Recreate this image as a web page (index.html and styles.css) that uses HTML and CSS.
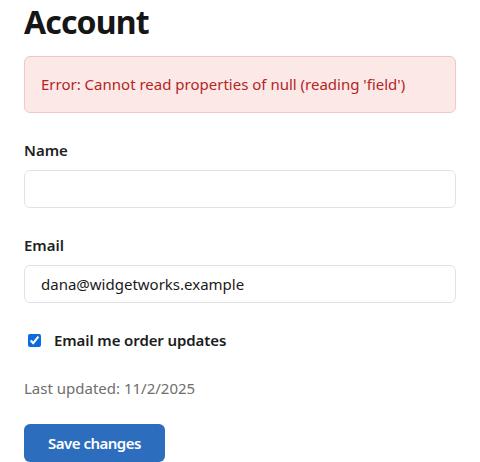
FILE: index.html
```html
<!DOCTYPE html>
<html lang="en">
<head>
<meta charset="utf-8">
<title>Account</title>
<link rel="stylesheet" href="styles.css">
</head>
<body>
<main class="page">
  <h1 class="title">Account</h1>
  <div class="alert" role="alert">Error: Cannot read properties of null (reading 'field')</div>
  <form class="form">
    <div class="field">
      <label class="label" for="name">Name</label>
      <input class="input" id="name" type="text">
    </div>
    <div class="field">
      <label class="label" for="email">Email</label>
      <input class="input" id="email" type="email" value="dana@widgetworks.example">
    </div>
    <label class="check">
      <input class="check-box" type="checkbox" checked>
      <span class="check-text">Email me order updates</span>
    </label>
    <p class="meta">Last updated: 11/2/2025</p>
    <button class="btn" type="button">Save changes</button>
  </form>
</main>
</body>
</html>
```
FILE: styles.css
```css
* { box-sizing: border-box; }
html, body { margin: 0; padding: 0; background: #ffffff; }
body {
  font-family: "Noto Sans", "Open Sans", sans-serif;
  color: #1f1f1f;
}
.page { padding: 0 24px; }
.title {
  margin: 2px 0 14px;
  font-size: 32px;
  line-height: 40px;
  font-weight: 700;
  letter-spacing: -0.85px;
  color: #161616;
}
.alert {
  margin: 0 0 27px;
  padding: 16px;
  line-height: 23px;
  font-size: 15px;
  color: #b3261e;
  background: #fde8e8;
  border: 1px solid #f5c5c5;
  border-radius: 6px;
}
.form { display: flex; flex-direction: column; align-items: flex-start; }
.field { width: 100%; margin-bottom: 27px; }
.field + .field { margin-bottom: 26px; }
.label {
  display: block;
  margin-bottom: 10px;
  font-size: 15px;
  line-height: 20px;
  font-weight: 600;
  color: #1f1f1f;
}
.input {
  display: block;
  width: 100%;
  height: 38px;
  margin: 0;
  padding: 0 16px;
  font-family: inherit;
  font-size: 15px;
  color: #1a1a1a;
  background: #ffffff;
  border: 1px solid #e2e2e2;
  border-radius: 6px;
}
.check {
  display: flex;
  align-items: center;
  height: 22px;
  margin-bottom: 26px;
}
.check-box {
  width: 13px;
  height: 13px;
  margin: 0 13px 0 4px;
  accent-color: #0b6bde;
}
.check-text {
  font-size: 15px;
  font-weight: 600;
  letter-spacing: -0.1px;
  color: #1c1c1c;
}
.meta {
  margin: 0 0 25px;
  font-size: 15px;
  line-height: 22px;
  color: #6e6e6e;
}
.btn {
  height: 38px;
  padding: 0 24px;
  font-family: inherit;
  font-size: 15px;
  font-weight: 600;
  letter-spacing: -0.5px;
  color: #ffffff;
  background: #2c6dbd;
  border: none;
  border-radius: 6px;
}
```
